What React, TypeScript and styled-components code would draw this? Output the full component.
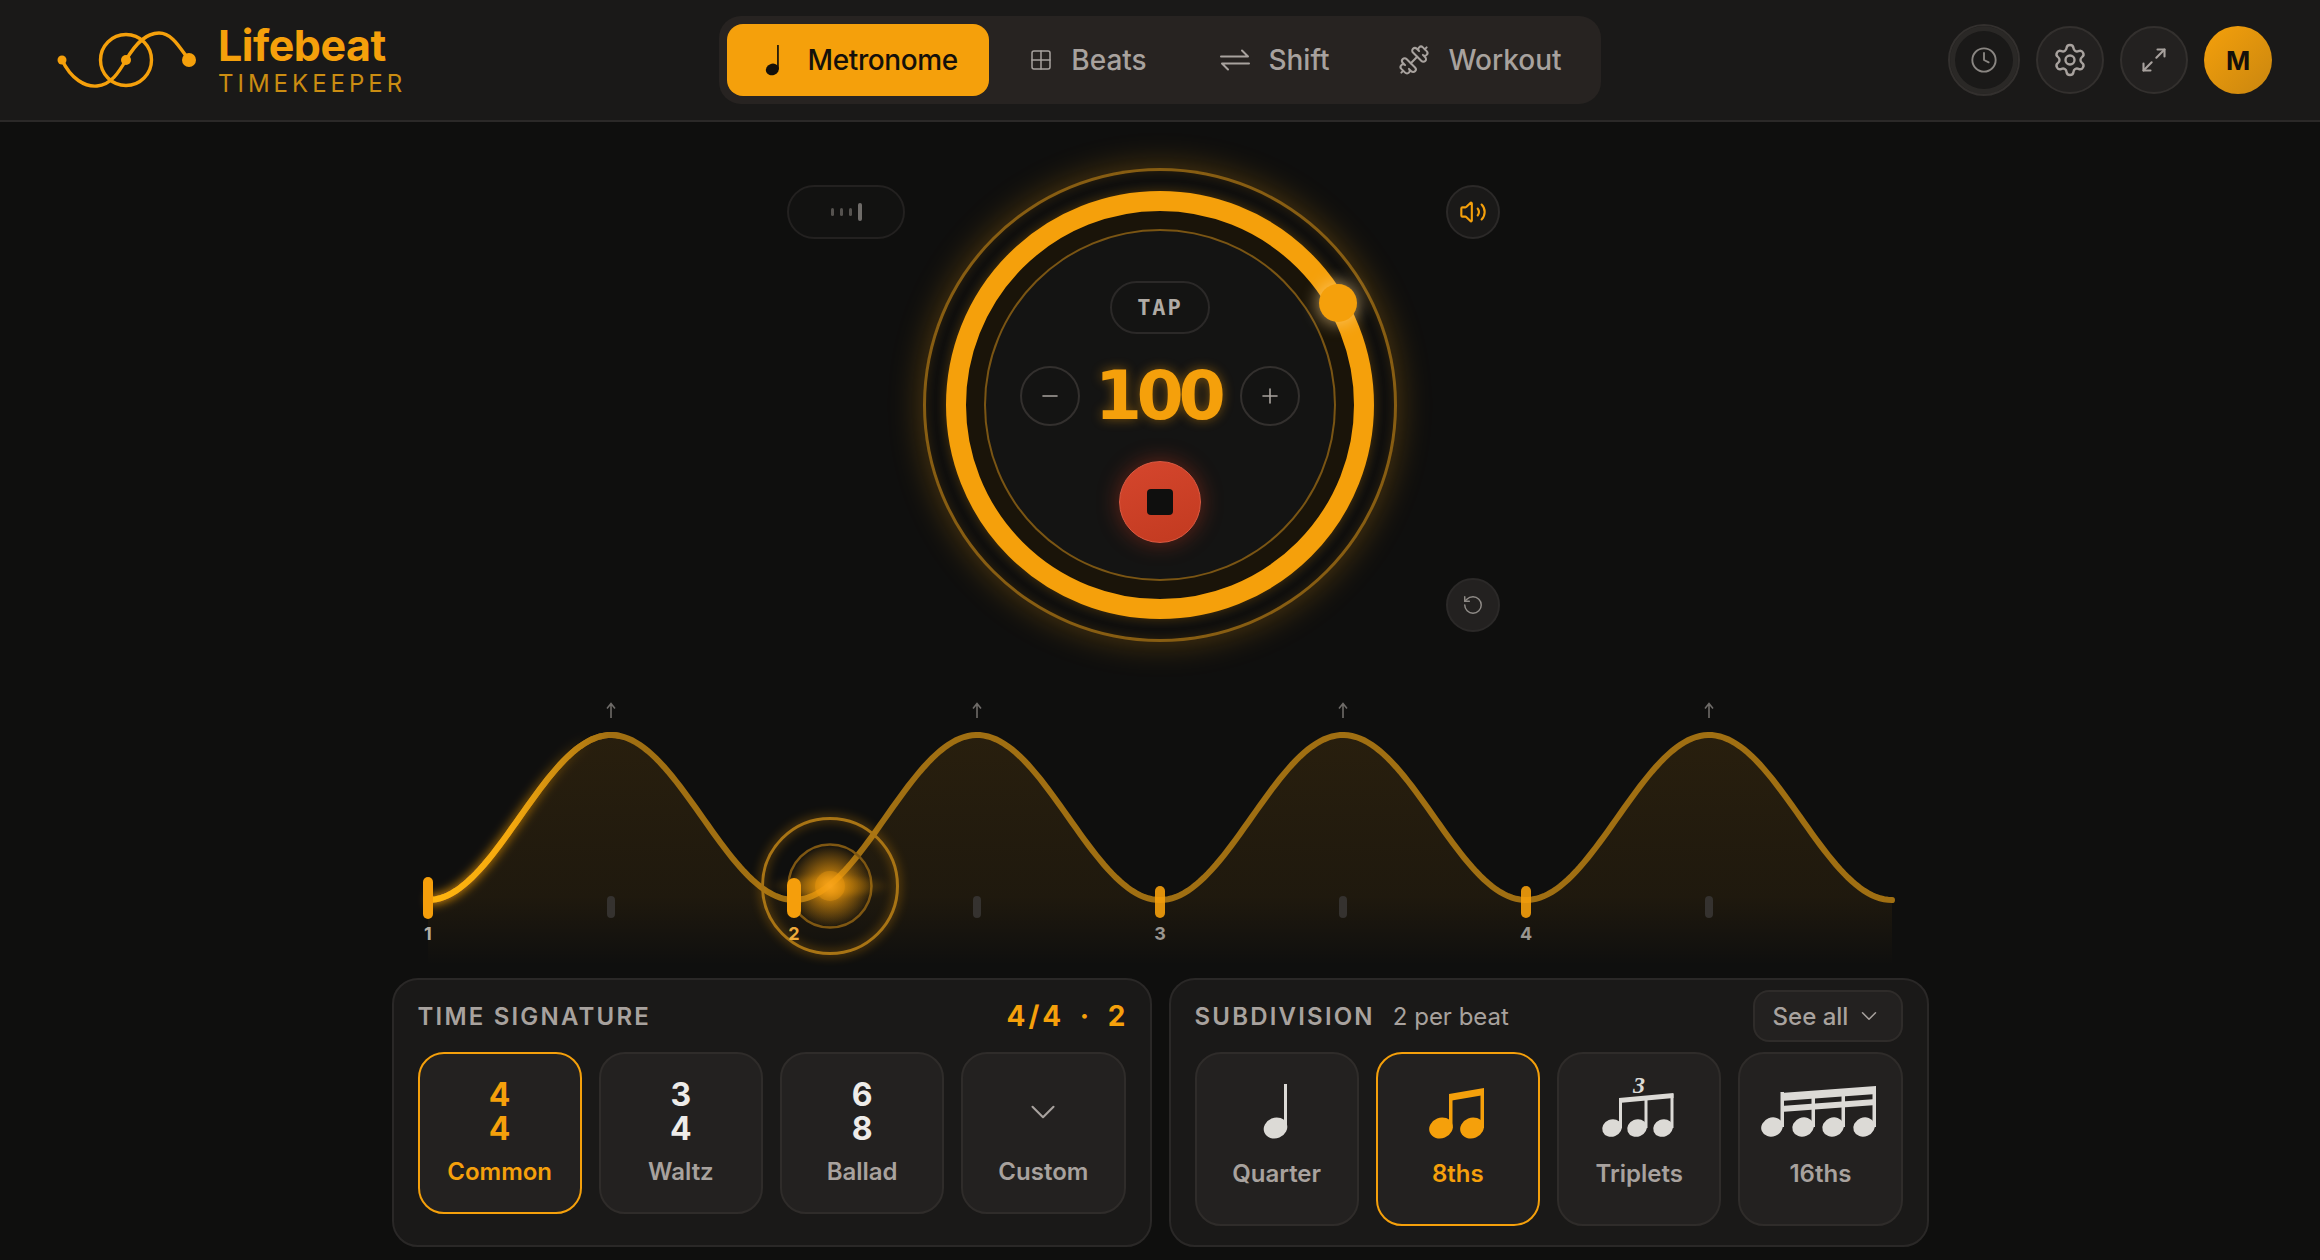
import React from "react"
import styled, { createGlobalStyle } from "styled-components"
import { ChevronDown, Clock, Dumbbell, Grid2x2, Maximize2, Minus, Plus, RotateCcw, Settings, Volume2 } from "lucide-react"

const amber = "#f5a00b"

const GlobalStyle = createGlobalStyle`
  html, body {
    margin: 0;
    padding: 0;
    background: #0f0f0e;
    font-family: Inter, "Liberation Sans", sans-serif;
    overflow: hidden;
  }
  * { box-sizing: border-box; }
`

const Page = styled.div`
  width: 2320px;
  height: 1260px;
  display: flex;
  flex-direction: column;
  align-items: center;
  background: #0f0f0e;
`

const Header = styled.header`
  width: 100%;
  height: 122px;
  flex: none;
  display: grid;
  grid-template-columns: 663px 882px 1fr;
  align-items: center;
  padding: 0 48px 0 56px;
  background: #1a1918;
  border-bottom: 2px solid #2b2928;
`

const Brand = styled.div`
  display: flex;
  align-items: center;
  gap: 20px;
`

const BrandText = styled.div`
  display: flex;
  flex-direction: column;
  padding-top: 3px;
`

const BrandName = styled.div`
  color: ${amber};
  font-size: 43px;
  line-height: 45px;
  font-weight: 700;
  letter-spacing: -0.5px;
`

const BrandSub = styled.div`
  color: #cb8d12;
  font-size: 24px;
  line-height: 32px;
  font-weight: 400;
  letter-spacing: 4px;
`

const Nav = styled.nav`
  width: 882px;
  height: 88px;
  display: flex;
  align-items: center;
  padding-left: 8px;
  background: #272321;
  border-radius: 22px;
`

const NavItem = styled.div<{ $active?: boolean; $w: number }>`
  width: ${(p) => p.$w}px;
  height: 72px;
  display: flex;
  align-items: center;
  justify-content: center;
  gap: ${(p) => (p.$active ? 27 : 18)}px;
  padding-left: ${(p) => (p.$active ? 8 : 0)}px;
  border-radius: 16px;
  background: ${(p) => (p.$active ? amber : "transparent")};
  color: ${(p) => (p.$active ? "#14100a" : "#a8a29e")};
  font-size: 28px;
  font-weight: 500;
  letter-spacing: ${(p) => (p.$active ? "-0.4px" : "0")};
`

const HeaderActions = styled.div`
  display: flex;
  align-items: center;
  justify-content: flex-end;
  gap: 16px;
`

const RoundBtn = styled.div`
  width: 68px;
  height: 68px;
  display: flex;
  align-items: center;
  justify-content: center;
  border-radius: 50%;
  background: #232120;
  border: 2px solid #33302e;
  color: #a8a29e;
`

const ClockBtn = styled(RoundBtn)`
  width: 72px;
  height: 72px;
  background: #1a1918;
  box-shadow: inset 0 0 0 5px #2a2826;
  border-color: #33302e;
  color: #8a8682;
`

const Avatar = styled.div`
  width: 68px;
  height: 68px;
  display: flex;
  align-items: center;
  justify-content: center;
  border-radius: 50%;
  background: linear-gradient(135deg, #f5a00b, #c9860f);
  color: #14100a;
  font-size: 26px;
  font-weight: 700;
`

const DialRow = styled.section`
  margin-top: 46px;
  display: grid;
  grid-template-columns: 1fr 474px 1fr;
  width: 100%;
  flex: none;
`

const DialLeft = styled.div`
  display: flex;
  justify-content: flex-end;
  padding: 17px 18px 0 0;
`

const DialRight = styled.div`
  display: flex;
  flex-direction: column;
  justify-content: space-between;
  align-items: flex-start;
  padding: 17px 0 10px 49px;
`

const Pill = styled.div`
  width: 118px;
  height: 54px;
  display: flex;
  align-items: center;
  justify-content: center;
  gap: 6px;
  border-radius: 27px;
  border: 2px solid #232120;
  background: #121211;
`

const PillTick = styled.span<{ $tall?: boolean }>`
  width: ${(p) => (p.$tall ? 4 : 3)}px;
  height: ${(p) => (p.$tall ? 18 : 8)}px;
  border-radius: 2px;
  background: ${(p) => (p.$tall ? "#6f6c69" : "#55524f")};
`

const SideBtn = styled.div<{ $amber?: boolean }>`
  width: 54px;
  height: 54px;
  display: flex;
  align-items: center;
  justify-content: center;
  border-radius: 50%;
  background: ${(p) => (p.$amber ? "#1a1918" : "#232120")};
  border: 2px solid #2b2928;
  color: ${(p) => (p.$amber ? amber : "#8f8b87")};
`

const Dial = styled.div`
  position: relative;
  width: 474px;
  height: 474px;
  display: flex;
  align-items: center;
  justify-content: center;
  border-radius: 50%;
  border: 3px solid rgba(176, 120, 20, 0.75);
  background: #0f0f0e;
  box-shadow: 0 0 34px rgba(245, 158, 11, 0.3), inset 0 0 12px rgba(245, 158, 11, 0.14);
`

const MainRing = styled.div`
  width: 428px;
  height: 428px;
  display: flex;
  align-items: center;
  justify-content: center;
  border-radius: 50%;
  border: 20px solid ${amber};
  background: #1a1409;
  box-shadow: 0 0 12px rgba(245, 158, 11, 0.28);
`

const Inner = styled.div`
  width: 352px;
  height: 352px;
  flex: none;
  display: flex;
  flex-direction: column;
  align-items: center;
  padding-top: 50px;
  border-radius: 50%;
  border: 2px solid rgba(176, 120, 20, 0.65);
  background: #141413;
`

const Thumb = styled.div`
  position: absolute;
  left: 393px;
  top: 113px;
  width: 38px;
  height: 38px;
  border-radius: 50%;
  background: ${amber};
  box-shadow: 0 0 16px 2px rgba(255, 214, 140, 0.6);
`

const Tap = styled.div`
  width: 100px;
  height: 53px;
  display: flex;
  align-items: center;
  justify-content: center;
  border-radius: 27px;
  border: 2px solid #2b2928;
  color: #b0aba5;
  font-family: "DejaVu Sans Mono", monospace;
  font-size: 22px;
  font-weight: 700;
  letter-spacing: 2px;
`

const BpmRow = styled.div`
  width: 280px;
  margin-top: 32px;
  display: flex;
  align-items: center;
  justify-content: space-between;
`

const StepBtn = styled.div`
  width: 60px;
  height: 60px;
  display: flex;
  align-items: center;
  justify-content: center;
  border-radius: 50%;
  border: 2px solid #33302e;
  color: #a8a29e;
`

const Bpm = styled.div`
  color: ${amber};
  font-family: "DejaVu Sans", sans-serif;
  font-size: 68px;
  line-height: 60px;
  font-weight: 700;
  letter-spacing: -5.5px;
  padding-right: 5px;
  text-shadow: 0 0 12px rgba(245, 158, 11, 0.45);
`

const StopBtn = styled.div`
  margin-top: 35px;
  width: 82px;
  height: 82px;
  display: flex;
  align-items: center;
  justify-content: center;
  border-radius: 50%;
  background: linear-gradient(160deg, #d5462d, #c23a20);
  border: 1px solid #dd5a42;
  box-shadow: 0 0 22px rgba(220, 60, 30, 0.42);
`

const StopSquare = styled.div`
  width: 26px;
  height: 26px;
  border-radius: 4px;
  background: #0f0f0e;
`

const WaveSvg = styled.svg`
  display: block;
  flex: none;
  margin-top: 48px;
`

const BeatLabel = styled.text<{ $c: string }>`
  font-family: Inter, sans-serif;
  font-size: 18px;
  font-weight: 700;
  fill: ${(p) => p.$c};
`

const Panels = styled.section`
  margin-top: 8px;
  width: 1537px;
  height: 269px;
  flex: none;
  display: grid;
  grid-template-columns: 760px 760px;
  gap: 17px;
`

const Panel = styled.div`
  display: flex;
  flex-direction: column;
  padding: 10px 24px 0;
  background: #1a1918;
  border: 2px solid #2a2827;
  border-radius: 26px;
`

const PanelHead = styled.div`
  height: 52px;
  margin-bottom: 10px;
  display: flex;
  align-items: center;
  justify-content: space-between;
`

const HeadLeft = styled.div`
  display: flex;
  align-items: center;
  gap: 18px;
`

const PanelTitle = styled.div`
  color: #a8a29e;
  font-size: 24px;
  font-weight: 600;
  letter-spacing: 2.2px;
`

const PanelNote = styled.div`
  color: #a8a29e;
  font-size: 24px;
  font-weight: 400;
`

const PanelValue = styled.div`
  margin-right: -3px;
  color: ${amber};
  font-size: 28px;
  font-weight: 700;
  letter-spacing: 3px;
  word-spacing: 6px;
`

const SeeAll = styled.div`
  width: 150px;
  height: 52px;
  display: flex;
  align-items: center;
  justify-content: center;
  gap: 8px;
  border-radius: 16px;
  background: #232120;
  border: 2px solid #2f2c2a;
  color: #a8a29e;
  font-size: 24px;
  font-weight: 500;
`

const TileGrid = styled.div`
  display: grid;
  grid-template-columns: repeat(4, 1fr);
  gap: 17px;
`

const Tile = styled.div<{ $active?: boolean; $h: number }>`
  height: ${(p) => p.$h}px;
  display: flex;
  flex-direction: column;
  align-items: center;
  padding-top: 24px;
  border-radius: 26px;
  background: #232120;
  border: 2px solid ${(p) => (p.$active ? amber : "#2f2c2a")};
  color: ${(p) => (p.$active ? amber : "#a8a29e")};
`

const Fraction = styled.div<{ $active?: boolean }>`
  height: 68px;
  display: flex;
  flex-direction: column;
  align-items: center;
  justify-content: center;
  color: ${(p) => (p.$active ? amber : "#eeece9")};
  font-size: 32px;
  line-height: 34px;
  font-weight: 700;
`

const TileLabel = styled.div`
  margin-top: 12px;
  font-size: 24px;
  line-height: 28px;
  font-weight: 600;
`

const NoteSlot = styled.div<{ $active?: boolean }>`
  height: 60px;
  display: flex;
  align-items: flex-end;
  color: ${(p) => (p.$active ? amber : "#dcdad6")};
`

const SubLabel = styled(TileLabel)`
  margin-top: 22px;
`

const NoteSvg = styled.svg`
  display: block;
  overflow: visible;
`

const Head = ({ x, y, r = 12 }: { x: number; y: number; r?: number }) => (
  <ellipse cx={x} cy={y} rx={r} ry={r * 0.86} transform={`rotate(-22 ${x} ${y})`} />
)

const QuarterNote = ({ size = 54 }: { size?: number }) => (
  <NoteSvg width={(size * 26) / 54} height={size} viewBox="0 0 26 54" fill="currentColor">
    <Head x={11.5} y={44} r={12} />
    <rect x={20} y={0} width={3} height={44} />
  </NoteSvg>
)

const EighthNotes = () => (
  <NoteSvg width="54" height="50" viewBox="0 0 54 50" fill="currentColor">
    <Head x={10} y={40} />
    <Head x={41} y={40} />
    <rect x={18} y={9} width={3.5} height={31} />
    <rect x={49.5} y={2} width={3.5} height={38} />
    <polygon points="18,6 53,0 53,7 18,13" />
  </NoteSvg>
)

const TripletNotes = () => (
  <NoteSvg width="72" height="62" viewBox="0 -2 72 62" fill="currentColor">
    <text x="36" y="15" textAnchor="middle" fontFamily="Liberation Serif, serif" fontStyle="italic" fontWeight="700" fontSize="24">3</text>
    <Head x={9} y={50} r={10} />
    <Head x={34} y={50} r={10} />
    <Head x={60} y={50} r={10} />
    <rect x={16} y={20} width={3} height={30} />
    <rect x={41.5} y={19} width={3} height={31} />
    <rect x={67.5} y={16} width={3} height={34} />
    <polygon points="16,20 70.5,15 70.5,20 16,25" />
  </NoteSvg>
)

const SixteenthNotes = () => (
  <NoteSvg width="114" height="52" viewBox="0 0 114 52" fill="currentColor">
    <Head x={9} y={41} r={11} />
    <Head x={40} y={41} r={11} />
    <Head x={70} y={41} r={11} />
    <Head x={101} y={41} r={11} />
    <rect x={17.5} y={6} width={3.5} height={35} />
    <rect x={48.5} y={6} width={3.5} height={35} />
    <rect x={78.5} y={5} width={3.5} height={36} />
    <rect x={109.5} y={2} width={3.5} height={39} />
    <polygon points="18,7 113,0 113,8 18,15" />
    <polygon points="18,20 113,13 113,19 18,26" />
  </NoteSvg>
)

const ShiftIcon = () => (
  <svg width="30" height="24" viewBox="0 0 30 24" fill="none" stroke="currentColor" strokeWidth="2" strokeLinecap="round" strokeLinejoin="round">
    <path d="M1 8.5h27l-6-6" />
    <path d="M29 15.5H2l6 6" />
  </svg>
)

const Logo = () => (
  <svg width="142" height="58" viewBox="55 31 142 58" fill="none" stroke={amber} strokeWidth="3.4" strokeLinecap="round">
    <circle cx="125" cy="60" r="25.5" />
    <path d="M61 60C70 79 84 87 96 86C110 85 118 72 125 60C135 43 145 33 158 33C172 33 180 50 188 60" />
    <g fill={amber} stroke="none">
      <ellipse cx="61" cy="60" rx="4.5" ry="4.5" />
      <circle cx="125" cy="60" r="5" />
      <circle cx="188" cy="60" r="7" />
    </g>
  </svg>
)

// one cosine hump per beat, trough at the beat, crest on the off-beat
const wavePath = (from: number, to: number) => {
  const pts: string[] = []
  for (let x = from; x <= to; x += 4) {
    const t = (x - 428) / 366
    const y = 900 - 165 * ((1 - Math.cos(2 * Math.PI * t)) / 2)
    pts.push(`${pts.length ? "L" : "M"}${x} ${y.toFixed(2)}`)
  }
  return pts.join(" ")
}

const beats = [428, 794, 1160, 1526]
const offBeats = [611, 977, 1343, 1709]

const Wave = () => (
  <WaveSvg width="1520" height="280" viewBox="400 690 1520 280" fill="none">
    <defs>
      <linearGradient id="trail" gradientUnits="userSpaceOnUse" x1="428" y1="0" x2="610" y2="0">
        <stop offset="0" stopColor="#ffb60f" />
        <stop offset="0.45" stopColor="#f5a90e" />
        <stop offset="1" stopColor="#a26f12" />
      </linearGradient>
      <linearGradient id="trailGlow" gradientUnits="userSpaceOnUse" x1="428" y1="0" x2="590" y2="0">
        <stop offset="0" stopColor="#f59e0b" stopOpacity="0.8" />
        <stop offset="0.6" stopColor="#f59e0b" stopOpacity="0.5" />
        <stop offset="1" stopColor="#f59e0b" stopOpacity="0" />
      </linearGradient>
      <linearGradient id="area" gradientUnits="userSpaceOnUse" x1="0" y1="735" x2="0" y2="965">
        <stop offset="0" stopColor="#f59e0b" stopOpacity="0.11" />
        <stop offset="0.7" stopColor="#f59e0b" stopOpacity="0.07" />
        <stop offset="1" stopColor="#f59e0b" stopOpacity="0" />
      </linearGradient>
      <radialGradient id="core">
        <stop offset="0" stopColor="#f9a825" stopOpacity="1" />
        <stop offset="0.4" stopColor="#f59e0b" stopOpacity="0.6" />
        <stop offset="1" stopColor="#f59e0b" stopOpacity="0" />
      </radialGradient>
      <linearGradient id="streak">
        <stop offset="0" stopColor="#f59e0b" stopOpacity="0" />
        <stop offset="0.5" stopColor="#f59e0b" stopOpacity="0.5" />
        <stop offset="1" stopColor="#f59e0b" stopOpacity="0" />
      </linearGradient>
      <filter id="soft" x="-30%" y="-30%" width="160%" height="160%">
        <feGaussianBlur stdDeviation="5" />
      </filter>
      <filter id="haze" x="-30%" y="-100%" width="160%" height="300%">
        <feGaussianBlur stdDeviation="3" />
      </filter>
    </defs>

    <path d={`${wavePath(428, 1892)} L1892 965 L428 965 Z`} fill="url(#area)" />
    <path d={wavePath(428, 1892)} stroke="#a06f12" strokeWidth="6" strokeLinecap="round" />
    <path d={wavePath(428, 596)} stroke="url(#trailGlow)" strokeWidth="10" filter="url(#soft)" />
    <path d={wavePath(428, 620)} stroke="url(#trail)" strokeWidth="6" />

    {offBeats.map((x) => (
      <g key={x}>
        <path d={`M${x} 718V704M${x - 4} 708.5L${x} 703.5L${x + 4} 708.5`} stroke="#6e6b68" strokeWidth="1.6" />
        <rect x={x - 4} y={896} width={8} height={22} rx={4} fill="#35322f" />
      </g>
    ))}

    <circle cx="830" cy="886" r="67.5" stroke="#f59e0b" strokeWidth="8" opacity="0.26" filter="url(#soft)" />
    <circle cx="830" cy="886" r="67.5" stroke="#a87414" strokeWidth="3" />
    <circle cx="830" cy="886" r="41.5" stroke="#7d5612" strokeWidth="2.5" />
    <ellipse cx="830" cy="886" rx="62" ry="9" fill="url(#streak)" filter="url(#haze)" />
    <circle cx="830" cy="886" r="42" fill="url(#core)" />
    <circle cx="830" cy="886" r="15" fill="#f59e0b" opacity="0.35" />

    <rect x={423} y={877} width={10} height={42} rx={5} fill="#f59e0b" />
    <rect x={787} y={878} width={14} height={40} rx={7} fill="#f59e0b" />
    <rect x={1155} y={886} width={10} height={32} rx={5} fill="#f59e0b" opacity="0.9" />
    <rect x={1521} y={886} width={10} height={32} rx={5} fill="#f59e0b" opacity="0.9" />

    {beats.map((x, i) => (
      <BeatLabel key={x} x={x} y={940} textAnchor="middle" $c={i === 1 ? "#eea93a" : i === 0 ? "#b5aea3" : "#9a9690"}>
        {i + 1}
      </BeatLabel>
    ))}
  </WaveSvg>
)

const App = () => {
  return (
    <Page>
      <GlobalStyle />
      <Header>
        <Brand>
          <Logo />
          <BrandText>
            <BrandName>Lifebeat</BrandName>
            <BrandSub>TIMEKEEPER</BrandSub>
          </BrandText>
        </Brand>
        <Nav>
          <NavItem $active $w={262}>
            <QuarterNote size={30} />
            Metronome
          </NavItem>
          <NavItem $w={198}>
            <Grid2x2 size={24} strokeWidth={1.5} />
            Beats
          </NavItem>
          <NavItem $w={176}>
            <ShiftIcon />
            Shift
          </NavItem>
          <NavItem $w={234}>
            <Dumbbell size={32} strokeWidth={1.5} />
            Workout
          </NavItem>
        </Nav>
        <HeaderActions>
          <ClockBtn>
            <Clock size={28} strokeWidth={1.6} />
          </ClockBtn>
          <RoundBtn>
            <Settings size={36} strokeWidth={1.6} />
          </RoundBtn>
          <RoundBtn>
            <Maximize2 size={28} strokeWidth={1.8} />
          </RoundBtn>
          <Avatar>M</Avatar>
        </HeaderActions>
      </Header>

      <DialRow>
        <DialLeft>
          <Pill>
            <PillTick />
            <PillTick />
            <PillTick />
            <PillTick $tall />
          </Pill>
        </DialLeft>
        <Dial>
          <MainRing>
            <Inner>
              <Tap>TAP</Tap>
              <BpmRow>
                <StepBtn>
                  <Minus size={24} strokeWidth={1.6} />
                </StepBtn>
                <Bpm>100</Bpm>
                <StepBtn>
                  <Plus size={24} strokeWidth={1.6} />
                </StepBtn>
              </BpmRow>
              <StopBtn>
                <StopSquare />
              </StopBtn>
            </Inner>
          </MainRing>
          <Thumb />
        </Dial>
        <DialRight>
          <SideBtn $amber>
            <Volume2 size={28} strokeWidth={1.8} />
          </SideBtn>
          <SideBtn>
            <RotateCcw size={22} strokeWidth={1.6} />
          </SideBtn>
        </DialRight>
      </DialRow>

      <Wave />

      <Panels>
        <Panel>
          <PanelHead>
            <PanelTitle>TIME SIGNATURE</PanelTitle>
            <PanelValue>4/4 · 2</PanelValue>
          </PanelHead>
          <TileGrid>
            <Tile $active $h={162}>
              <Fraction $active>
                <span>4</span>
                <span>4</span>
              </Fraction>
              <TileLabel>Common</TileLabel>
            </Tile>
            <Tile $h={162}>
              <Fraction>
                <span>3</span>
                <span>4</span>
              </Fraction>
              <TileLabel>Waltz</TileLabel>
            </Tile>
            <Tile $h={162}>
              <Fraction>
                <span>6</span>
                <span>8</span>
              </Fraction>
              <TileLabel>Ballad</TileLabel>
            </Tile>
            <Tile $h={162}>
              <Fraction>
                <ChevronDown size={42} strokeWidth={1.2} color="#a8a29e" />
              </Fraction>
              <TileLabel>Custom</TileLabel>
            </Tile>
          </TileGrid>
        </Panel>
        <Panel>
          <PanelHead>
            <HeadLeft>
              <PanelTitle>SUBDIVISION</PanelTitle>
              <PanelNote>2 per beat</PanelNote>
            </HeadLeft>
            <SeeAll>
              See all
              <ChevronDown size={26} strokeWidth={1.4} />
            </SeeAll>
          </PanelHead>
          <TileGrid>
            <Tile $h={174}>
              <NoteSlot>
                <QuarterNote />
              </NoteSlot>
              <SubLabel>Quarter</SubLabel>
            </Tile>
            <Tile $active $h={174}>
              <NoteSlot $active>
                <EighthNotes />
              </NoteSlot>
              <SubLabel>8ths</SubLabel>
            </Tile>
            <Tile $h={174}>
              <NoteSlot>
                <TripletNotes />
              </NoteSlot>
              <SubLabel>Triplets</SubLabel>
            </Tile>
            <Tile $h={174}>
              <NoteSlot>
                <SixteenthNotes />
              </NoteSlot>
              <SubLabel>16ths</SubLabel>
            </Tile>
          </TileGrid>
        </Panel>
      </Panels>
    </Page>
  )
}

export default App
